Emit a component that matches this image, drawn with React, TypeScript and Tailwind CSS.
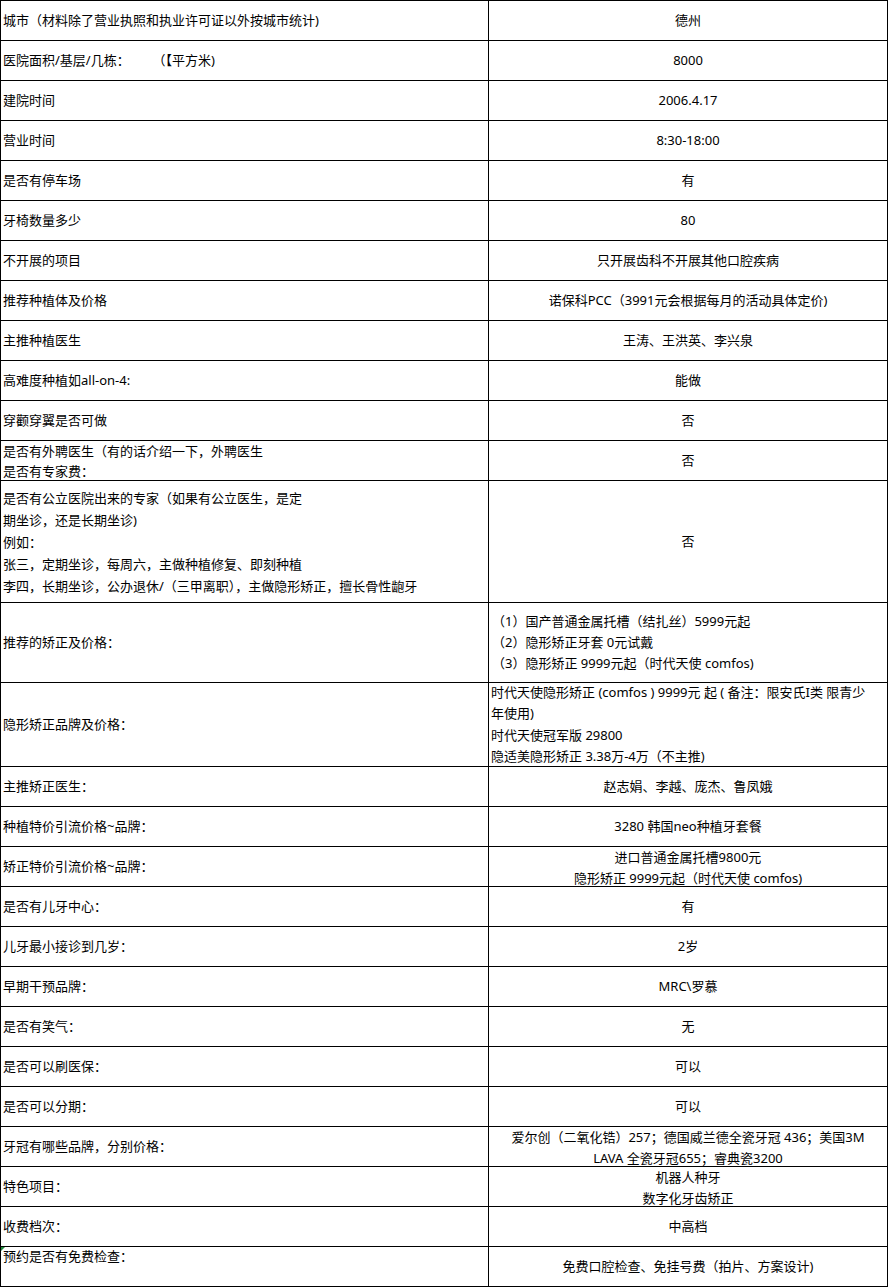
import React from "react";

type Row = {
  left: React.ReactNode;
  right: React.ReactNode;
  h?: string;
  leftClass?: string;
  rightClass?: string;
  marker?: boolean;
};

const L = (lines: string[]) => (
  <div>
    {lines.map((t, i) => (
      <div key={i} className="whitespace-pre">
        {t}
      </div>
    ))}
  </div>
);

const rows: Row[] = [
  { left: "城市（材料除了营业执照和执业许可证以外按城市统计)", right: "德州" },
  { left: "医院面积/基层/几栋：　　 （【平方米)", right: "8000" },
  { left: "建院时间", right: "2006.4.17" },
  { left: "营业时间", right: "8:30-18:00" },
  { left: "是否有停车场", right: "有" },
  { left: "牙椅数量多少", right: "80" },
  { left: "不开展的项目", right: "只开展齿科不开展其他口腔疾病" },
  { left: "推荐种植体及价格", right: "诺保科PCC（3991元会根据每月的活动具体定价)" },
  { left: "主推种植医生", right: "王涛、王洪英、李兴泉" },
  { left: "高难度种植如all-on-4:", right: "能做" },
  { left: "穿颧穿翼是否可做", right: "否" },
  {
    left: L(["是否有外聘医生（有的话介绍一下，外聘医生", "是否有专家费："]),
    right: "否",
    leftClass: "items-start leading-[20px]",
  },
  {
    left: L([
      "是否有公立医院出来的专家（如果有公立医生，是定",
      "期坐诊，还是长期坐诊)",
      "例如：",
      "张三，定期坐诊，每周六，主做种植修复、即刻种植",
      "李四，长期坐诊，公办退休/（三甲离职），主做隐形矫正，擅长骨性龅牙",
    ]),
    right: "否",
    h: "h-[122px]",
    leftClass: "items-center leading-[22px]",
  },
  {
    left: "推荐的矫正及价格：",
    right: L([
      "（1）国产普通金属托槽（结扎丝）5999元起",
      "（2）隐形矫正牙套 0元试戴",
      "（3）隐形矫正 9999元起（时代天使 comfos)",
    ]),
    h: "h-[80px]",
    rightClass: "items-center justify-start pl-[3px] leading-[21px]",
  },
  {
    left: "隐形矫正品牌及价格：",
    right: L([
      "时代天使隐形矫正 (comfos ) 9999元 起 ( 备注：限安氏I类 限青少",
      "年使用)",
      "时代天使冠军版 29800",
      "隐适美隐形矫正 3.38万-4万（不主推)",
    ]),
    h: "h-[84px]",
    rightClass: "items-center justify-start pl-[2px] leading-[21.5px]",
  },
  { left: "主推矫正医生：", right: "赵志娟、李越、庞杰、鲁凤娥" },
  { left: "种植特价引流价格~品牌：", right: "3280 韩国neo种植牙套餐" },
  {
    left: "矫正特价引流价格~品牌：",
    right: L(["进口普通金属托槽9800元", "隐形矫正 9999元起（时代天使 comfos)"]),
    rightClass: "items-start justify-center leading-[21px] text-center",
  },
  { left: "是否有儿牙中心：", right: "有" },
  { left: "儿牙最小接诊到几岁：", right: "2岁" },
  { left: "早期干预品牌：", right: "MRC\\罗慕" },
  { left: "是否有笑气：", right: "无" },
  { left: "是否可以刷医保：", right: "可以" },
  { left: "是否可以分期：", right: "可以" },
  {
    left: "牙冠有哪些品牌，分别价格：",
    right: L([
      "爱尔创（二氧化锆）257；德国威兰德全瓷牙冠 436；美国3M",
      "LAVA 全瓷牙冠655；睿典瓷3200",
    ]),
    rightClass: "items-start justify-center leading-[21px] text-center",
  },
  {
    left: "特色项目：",
    right: L(["机器人种牙", "数字化牙齿矫正"]),
    rightClass: "items-start justify-center leading-[21px] text-center",
  },
  { left: "收费档次：", right: "中高档" },
  {
    left: "预约是否有免费检查：",
    right: "免费口腔检查、免挂号费（拍片、方案设计)",
    leftClass: "items-start",
    marker: true,
  },
];

export default function App() {
  return (
    <div className="bg-white min-h-[1287px] text-[13px] text-black font-['Noto_Sans','Noto_Sans_CJK_SC',sans-serif] leading-[19px]">
      <div className="w-[888px] border-l border-t border-black">
        {rows.map((r, i) => (
          <div key={i} className={`flex border-b border-black ${r.h ?? "h-[40px]"}`}>
            <div
              className={`relative w-[488px] shrink-0 border-r border-black flex pl-[2px] whitespace-pre ${
                r.leftClass ?? "items-center"
              }`}
            >
              {r.marker && (
                <div className="absolute left-0 top-0 w-0 h-0 border-t-[4px] border-r-[4px] border-t-[#1e8a3a] border-r-transparent" />
              )}
              {r.left}
            </div>
            <div
              className={`flex-1 border-r border-black flex whitespace-pre ${
                r.rightClass ?? "items-center justify-center text-center"
              }`}
            >
              {r.right}
            </div>
          </div>
        ))}
      </div>
    </div>
  );
}
